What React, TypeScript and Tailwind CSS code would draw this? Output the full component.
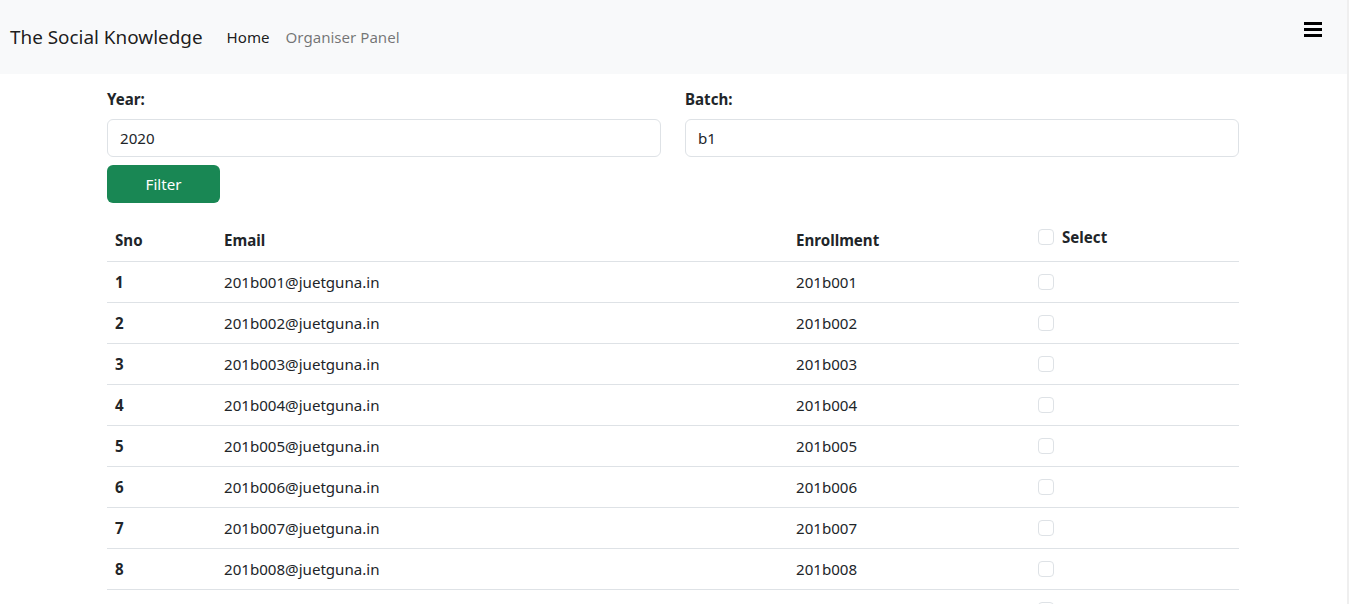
import React, { useState } from "react";

const students = [1, 2, 3, 4, 5, 6, 7, 8, 9].map((n) => ({
  sno: n,
  email: `201b00${n}@juetguna.in`,
  enrollment: `201b00${n}`,
}));

function Checkbox({ checked, onChange }: { checked: boolean; onChange: () => void }) {
  return (
    <input
      type="checkbox"
      checked={checked}
      onChange={onChange}
      className="appearance-none w-4 h-4 rounded-[4px] border border-[#dee2e6] bg-white align-middle checked:bg-[#0d6efd] checked:border-[#0d6efd]"
    />
  );
}

export default function App() {
  const [year, setYear] = useState("2020");
  const [batch, setBatch] = useState("b1");
  const [selected, setSelected] = useState<number[]>([]);

  const toggle = (n: number) => {
    setSelected(selected.includes(n) ? selected.filter((s) => s !== n) : [...selected, n]);
  };

  return (
    <div className="flex min-h-screen bg-white text-[#212529] text-[15.1px] leading-6 font-['Segoe_UI','Noto_Sans',sans-serif]">
      <div className="flex-1">
        <nav className="h-[74px] bg-[#f8f9fa] flex items-center pl-[10px] pr-[25px]">
          <span className="text-[18.9px] leading-[30px] text-[rgba(0,0,0,0.9)] mr-4">The Social Knowledge</span>
          <a className="px-2 text-[15.1px] text-[rgba(0,0,0,0.9)]" href="#">Home</a>
          <a className="px-2 text-[15.1px] text-[rgba(0,0,0,0.55)]" href="#">Organiser Panel</a>
          <button className="ml-auto flex flex-col gap-[3.3px] mb-[15px]">
            <span className="block w-[18px] h-[2.7px] bg-black"></span>
            <span className="block w-[18px] h-[2.7px] bg-black"></span>
            <span className="block w-[18px] h-[2.7px] bg-black"></span>
          </button>
        </nav>

        <div className="w-[1132px] ml-[107px] pt-[13px]">
          <div className="grid grid-cols-2 gap-6">
            <div>
              <label className="block font-bold mb-2">Year:</label>
              <input
                value={year}
                onChange={(e) => setYear(e.target.value)}
                className="w-full h-[38px] px-3 border border-[#dee2e6] rounded-md outline-none"
              />
            </div>
            <div>
              <label className="block font-bold mb-2">Batch:</label>
              <input
                value={batch}
                onChange={(e) => setBatch(e.target.value)}
                className="w-full h-[38px] px-3 border border-[#dee2e6] rounded-md outline-none"
              />
            </div>
          </div>
          <button className="mt-2 w-[113px] h-[38px] bg-[#198754] text-white rounded-md">Filter</button>

          <table className="w-full table-fixed mt-4 border-collapse">
            <colgroup>
              <col className="w-[109px]" />
              <col className="w-[572px]" />
              <col className="w-[242px]" />
              <col />
            </colgroup>
            <thead>
              <tr className="border-b border-[#dee2e6]">
                <th className="text-left px-2 py-2 h-[41px]">Sno</th>
                <th className="text-left px-2 py-2">Email</th>
                <th className="text-left px-2 py-2">Enrollment</th>
                <th className="text-left px-2 pt-[6px] pb-[10px]">
                  <span className="inline-flex items-center gap-2">
                    <Checkbox
                      checked={selected.length === students.length}
                      onChange={() =>
                        setSelected(selected.length === students.length ? [] : students.map((s) => s.sno))
                      }
                    />
                    Select
                  </span>
                </th>
              </tr>
            </thead>
            <tbody>
              {students.map((s) => (
                <tr key={s.sno} className="border-b border-[#dee2e6]">
                  <th className="text-left px-2 py-2 h-[41px]">{s.sno}</th>
                  <td className="px-2 py-2">{s.email}</td>
                  <td className="px-2 py-2">{s.enrollment}</td>
                  <td className="px-2 py-2">
                    <span className="flex items-center h-6">
                      <Checkbox checked={selected.includes(s.sno)} onChange={() => toggle(s.sno)} />
                    </span>
                  </td>
                </tr>
              ))}
            </tbody>
          </table>
        </div>
      </div>
      <div className="w-[2px] bg-[#efefef]"></div>
    </div>
  );
}
